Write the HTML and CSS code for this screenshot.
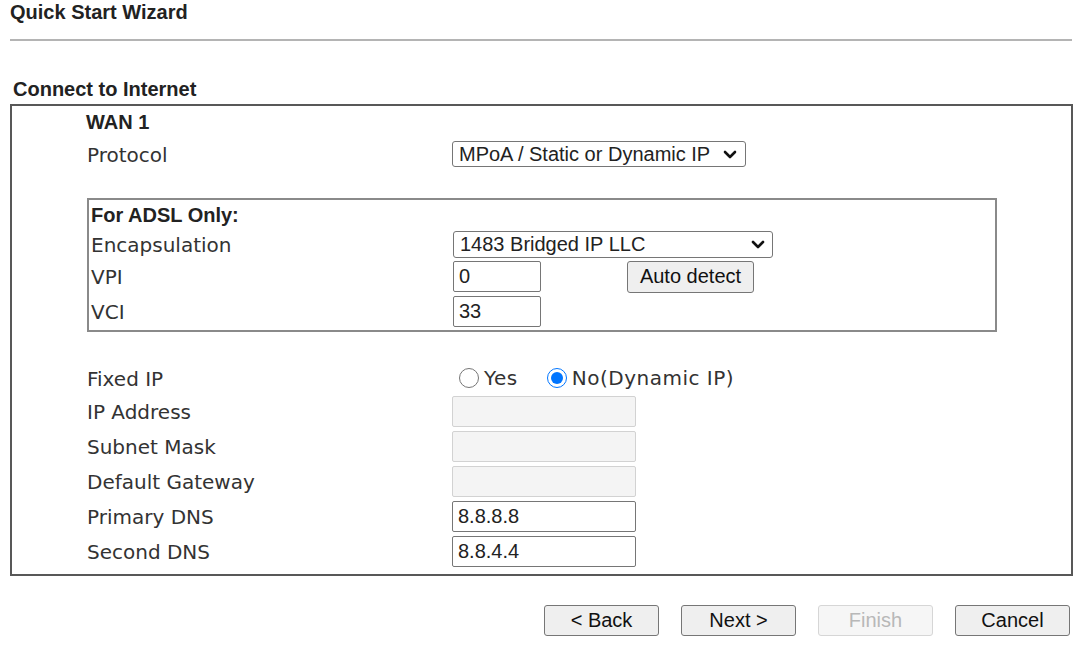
FILE: index.html
```html
<!DOCTYPE html>
<html lang="en">

<head>
  <meta charset="UTF-8" />
  <meta name="viewport" content="width=device-width, initial-scale=1.0" />
  <title>Quick Start Wizard</title>
  <link rel="stylesheet" href="styles.css">
</head>

<body>
  <div class="page">
    <div class="title">Quick Start Wizard</div>
    <div class="rule"></div>

    <div class="section-title">Connect to Internet</div>
    <div class="panel">
      <div class="row row-wan">
        <span class="strong">WAN 1</span>
      </div>
      <div class="row row-protocol">
        <span class="label">Protocol</span>
        <span class="sel-wrap">
          <select class="sel-protocol">
            <option>MPoA / Static or Dynamic IP</option>
            <option>PPPoE / PPPoA</option>
          </select>
          <svg class="chev" viewBox="0 0 14 9"><polyline points="2,2 7,7 12,2" /></svg>
        </span>
      </div>

      <div class="adsl">
        <div class="row adsl-head">
          <span class="strong">For ADSL Only:</span>
        </div>
        <div class="row adsl-encap">
          <span class="label">Encapsulation</span>
          <span class="sel-wrap">
            <select class="sel-encap">
              <option>1483 Bridged IP LLC</option>
              <option>1483 Routed IP LLC</option>
              <option>1483 Bridged IP VC-Mux</option>
            </select>
            <svg class="chev" viewBox="0 0 14 9"><polyline points="2,2 7,7 12,2" /></svg>
          </span>
        </div>
        <div class="row adsl-row">
          <span class="label">VPI</span>
          <div class="ctrl">
            <input type="text" class="txt txt-short" value="0">
            <button class="btn btn-detect">Auto detect</button>
          </div>
        </div>
        <div class="row adsl-row">
          <span class="label">VCI</span>
          <input type="text" class="txt txt-short" value="33">
        </div>
      </div>

      <div class="ip-block">
        <div class="row row-fixed">
          <span class="label">Fixed IP</span>
          <div class="radios">
            <label class="radio"><input type="radio" name="fixed">Yes</label>
            <label class="radio radio-no"><input type="radio" name="fixed" checked>No(Dynamic IP)</label>
          </div>
        </div>
        <div class="row row-ip">
          <span class="label">IP Address</span>
          <input type="text" class="txt txt-long" disabled>
        </div>
        <div class="row row-ip">
          <span class="label">Subnet Mask</span>
          <input type="text" class="txt txt-long" disabled>
        </div>
        <div class="row row-ip">
          <span class="label">Default Gateway</span>
          <input type="text" class="txt txt-long" disabled>
        </div>
        <div class="row row-ip">
          <span class="label">Primary DNS</span>
          <input type="text" class="txt txt-long" value="8.8.8.8">
        </div>
        <div class="row row-ip">
          <span class="label">Second DNS</span>
          <input type="text" class="txt txt-long" value="8.8.4.4">
        </div>
      </div>
    </div>

    <div class="actions">
      <button class="btn btn-nav">&lt; Back</button>
      <button class="btn btn-nav">Next &gt;</button>
      <button class="btn btn-nav" disabled>Finish</button>
      <button class="btn btn-nav">Cancel</button>
    </div>
  </div>
</body>

</html>
```

FILE: styles.css
```css
body {
  margin: 0;
  background: #fff;
  font-family: "DejaVu Sans", Verdana, sans-serif;
  font-size: 20px;
  color: #333;
}

.page {
  padding: 0 10px;
}

.title,
.section-title,
.strong {
  font-family: "Liberation Sans", Arial, sans-serif;
  font-weight: bold;
  font-size: 20px;
  line-height: 24px;
  color: #222;
}

.title {
  height: 24px;
}

.rule {
  width: 1062px;
  height: 2px;
  margin-top: 15px;
  background: #b4b4b4;
}

.section-title {
  margin: 36px 0 3px 3px;
}

.panel {
  width: 1063px;
  box-sizing: border-box;
  border: 2px solid #585858;
  padding: 0 0 5px 75px;
}

.row {
  display: grid;
  grid-template-columns: 365px 1fr;
  align-items: center;
  line-height: 24px;
}

.label {
  padding-top: 1px;
}

.row-wan {
  height: 32px;
}

.row-wan .strong {
  margin-left: -1px;
}

.row-protocol {
  height: 32px;
}

.sel-wrap {
  position: relative;
  display: flex;
}

select {
  appearance: none;
  font-family: "Liberation Sans", Arial, sans-serif;
  font-size: 20px;
  color: #222;
  background: #fff;
  border: 1px solid #767676;
  border-radius: 3px;
  padding: 0 6px;
  box-sizing: border-box;
}

.chev {
  position: absolute;
  top: 50%;
  width: 14px;
  height: 9px;
  margin-top: -4px;
  pointer-events: none;
}

.chev polyline {
  fill: none;
  stroke: #111;
  stroke-width: 2.6;
  stroke-linecap: round;
  stroke-linejoin: round;
}

.sel-protocol {
  width: 294px;
  height: 26px;
}

.sel-protocol + .chev {
  left: 271px;
}

.adsl {
  width: 910px;
  box-sizing: border-box;
  margin-top: 28px;
  border: 2px solid #8a8a8a;
  padding: 0 0 1px 2px;
}

.adsl .row {
  grid-template-columns: 362px 1fr;
}

.adsl-head {
  height: 29px;
}

.adsl-encap {
  height: 30px;
}

.sel-encap {
  width: 320px;
  height: 27px;
}

.sel-encap + .chev {
  left: 298px;
}

.adsl-row {
  height: 35px;
}

.ctrl {
  display: flex;
  align-items: center;
}

.txt {
  font-family: "Liberation Sans", Arial, sans-serif;
  font-size: 20px;
  color: #222;
  height: 31px;
  box-sizing: border-box;
  border: 1px solid #767676;
  border-radius: 2px;
  padding: 0 5px;
  margin: 0;
  background: #fff;
}

.txt:disabled {
  background: #f4f4f4;
  border-color: #d2d2d2;
}

.txt-short {
  width: 88px;
}

.txt-long {
  width: 184px;
}

.btn {
  font-family: "Liberation Sans", Arial, sans-serif;
  font-size: 20px;
  color: #111;
  background: #efefef;
  border: 1px solid #767676;
  border-radius: 3px;
  padding: 0;
  box-sizing: border-box;
}

.btn:disabled {
  color: #b8b8b8;
  background: #f6f6f6;
  border-color: #d6d6d6;
}

.btn-detect {
  width: 127px;
  height: 32px;
  margin-left: 86px;
}

.ip-block {
  margin-top: 30px;
}

.row-fixed {
  height: 32px;
}

.row-ip {
  height: 35px;
}

.radios {
  display: flex;
  align-items: center;
}

.radio {
  display: flex;
  align-items: center;
  letter-spacing: 0.5px;
}

.radio input {
  width: 20px;
  height: 20px;
  margin: 0 5px 0 7px;
  accent-color: #0075ff;
}

.radio-no {
  margin-left: 22px;
}

.actions {
  width: 1063px;
  box-sizing: border-box;
  display: flex;
  justify-content: flex-end;
  gap: 22px;
  margin-top: 29px;
  padding-right: 3px;
}

.btn-nav {
  width: 115px;
  height: 31px;
}
```
